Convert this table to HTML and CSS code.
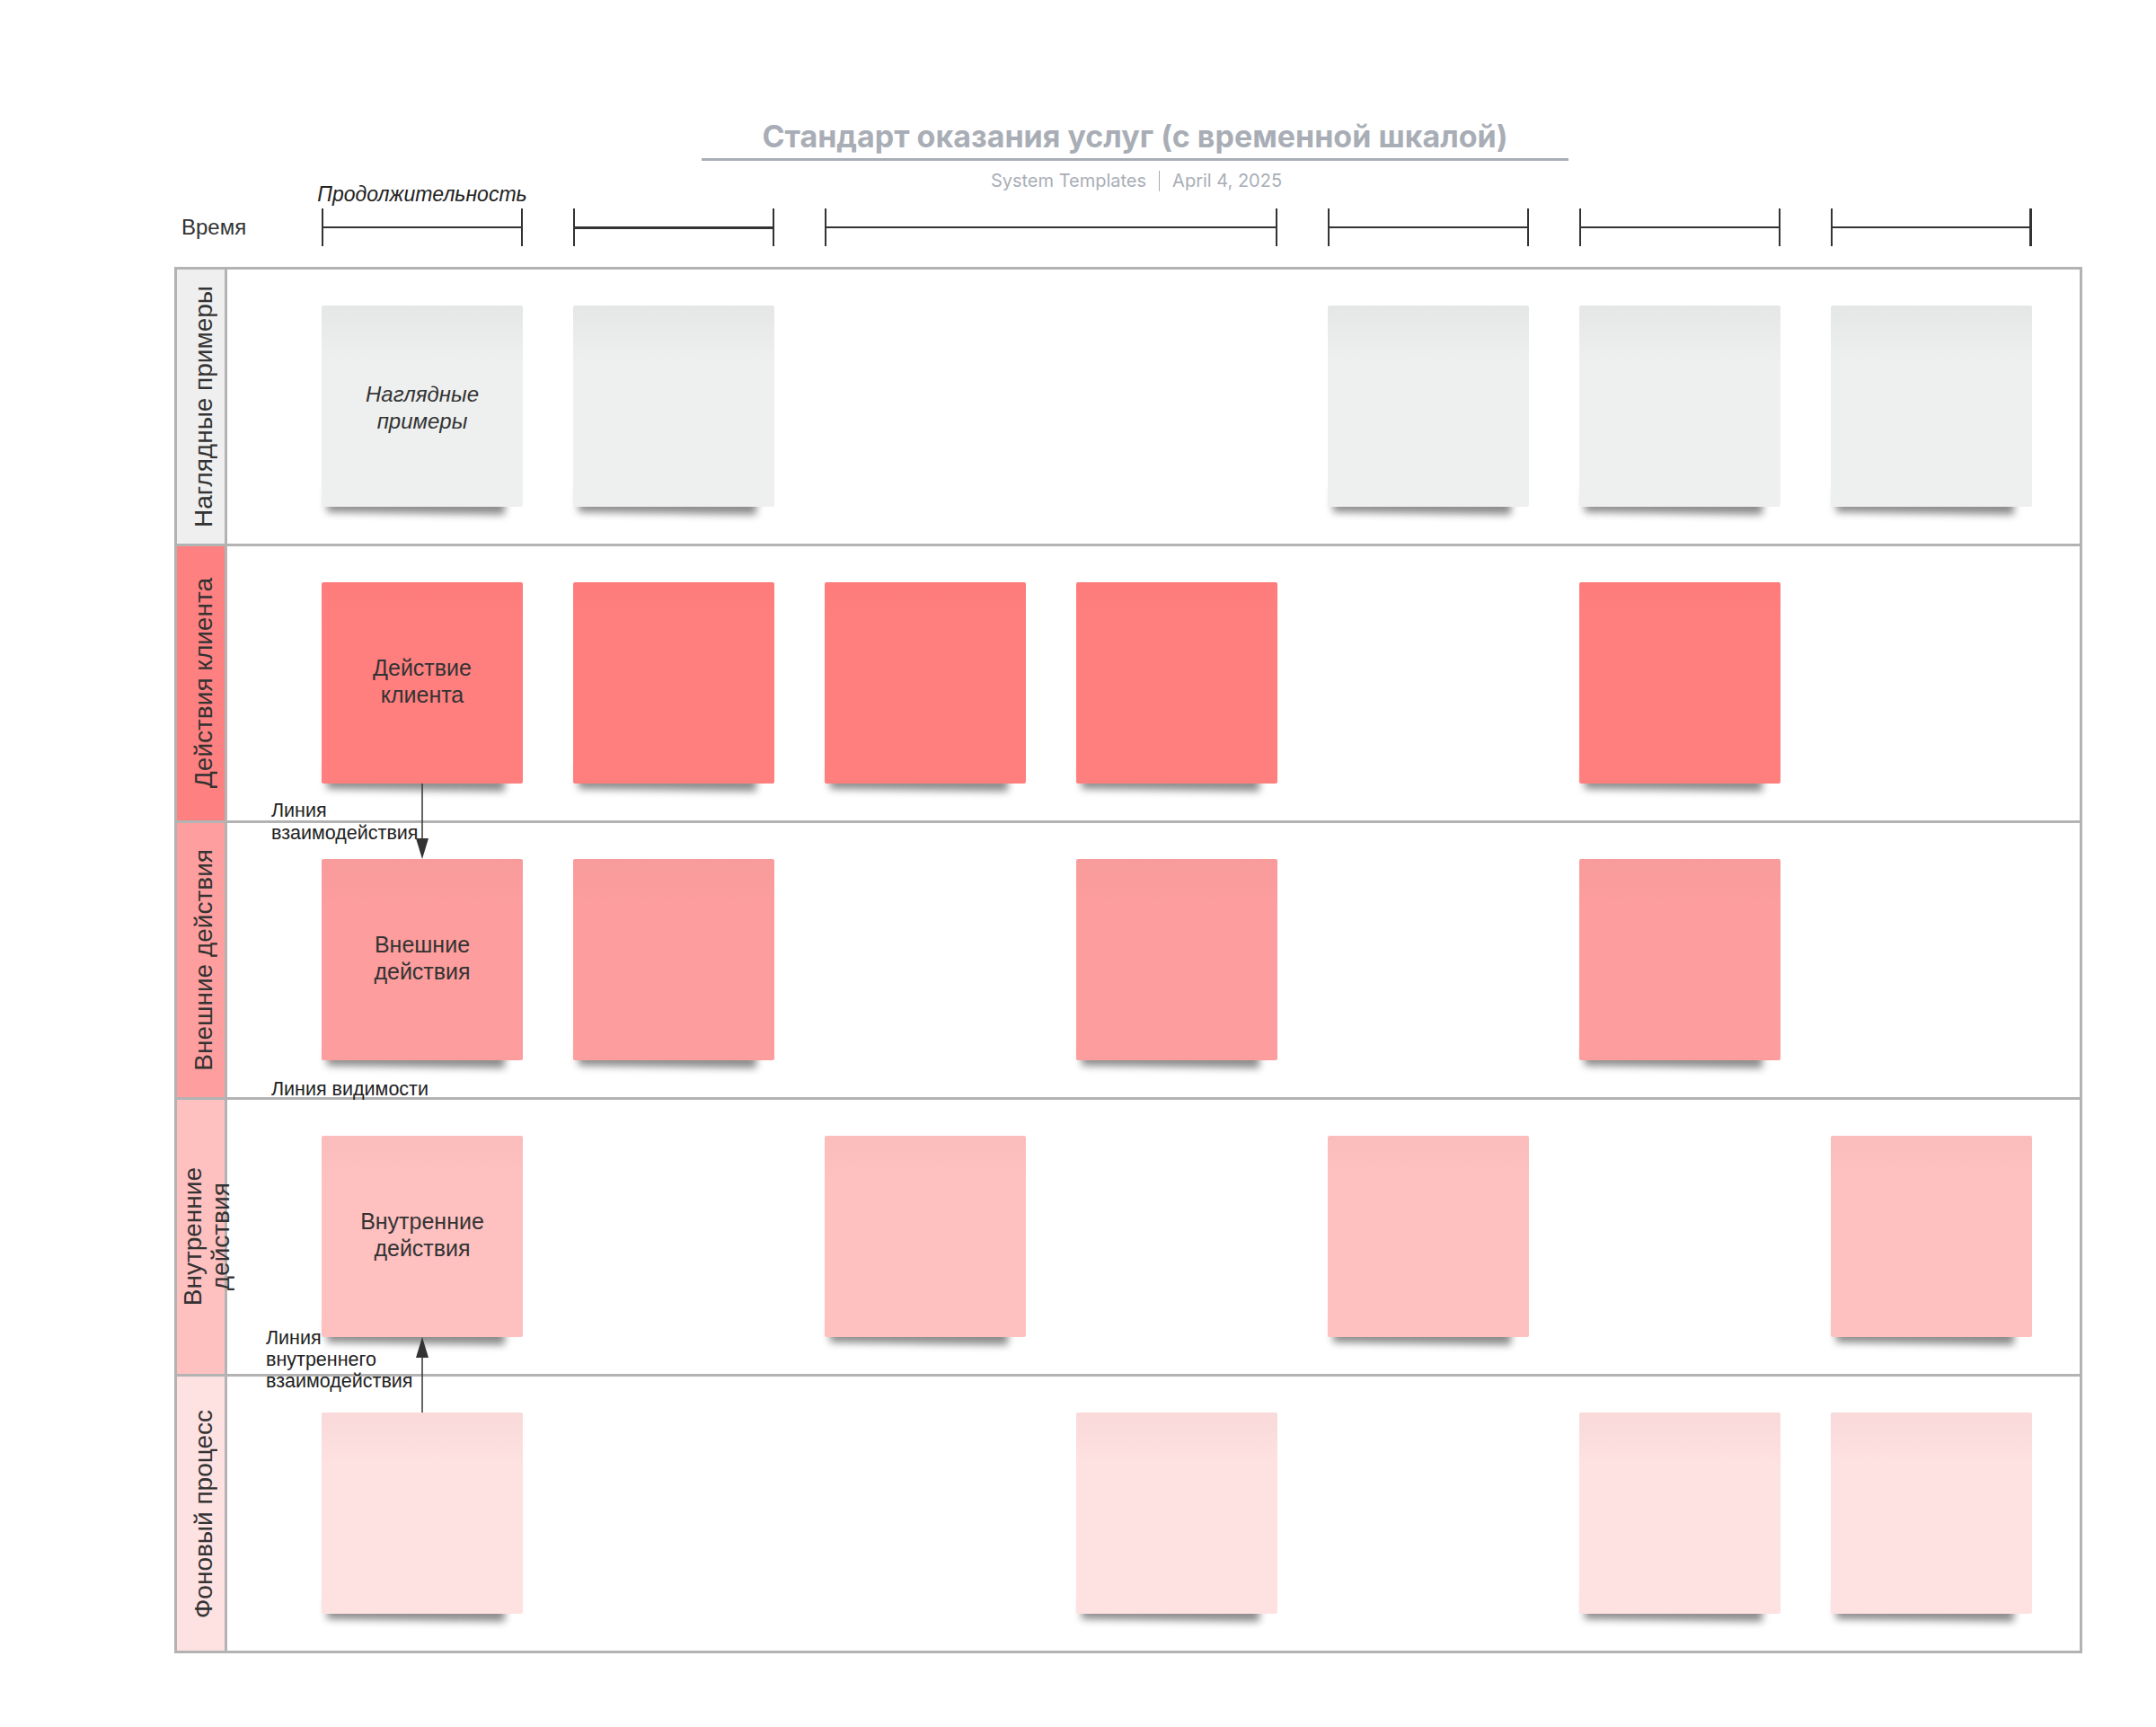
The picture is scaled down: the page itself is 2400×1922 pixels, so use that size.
FILE: index.html
```html
<!DOCTYPE html>
<html lang="ru">
<head>
<meta charset="utf-8">
<title>Стандарт оказания услуг (с временной шкалой)</title>
<link rel="stylesheet" href="styles.css">
</head>
<body>
<div class="page">
  <header class="doc-head">
    <h1 class="doc-title">Стандарт оказания услуг (с временной шкалой)</h1>
    <div class="doc-meta"><span>System Templates</span><span class="sep"></span><span>April 4, 2025</span></div>
  </header>

  <section class="timeline">
    <div class="tl-dur">Продолжительность</div>
    <div class="tl-time">Время</div>
    <div class="seg c1"></div>
    <div class="seg c2 thick"></div>
    <div class="seg c3 span2"></div>
    <div class="seg c5"></div>
    <div class="seg c6"></div>
    <div class="seg c7 end"></div>
  </section>

  <section class="frame">
    <div class="lane">
      <div class="lane-head h-gray"><span>Наглядные примеры</span></div>
      <div class="lane-body">
        <div class="card k-gray c1"><span class="it">Наглядные<br>примеры</span></div>
        <div class="card k-gray c2"></div>
        <div class="card k-gray c5"></div>
        <div class="card k-gray c6"></div>
        <div class="card k-gray c7"></div>
      </div>
    </div>

    <div class="lane">
      <div class="lane-head h-red"><span>Действия клиента</span></div>
      <div class="lane-body">
        <div class="card k-red c1"><span class="txt">Действие<br>клиента</span></div>
        <div class="card k-red c2"></div>
        <div class="card k-red c3"></div>
        <div class="card k-red c4"></div>
        <div class="card k-red c6"></div>
      </div>
      <div class="line-label lbl-interact">Линия<br>взаимодействия</div>
    </div>

    <div class="lane">
      <div class="lane-head h-mid"><span>Внешние действия</span></div>
      <div class="lane-body">
        <div class="card k-mid c1"><span class="txt">Внешние<br>действия</span></div>
        <div class="card k-mid c2"></div>
        <div class="card k-mid c4"></div>
        <div class="card k-mid c6"></div>
      </div>
      <div class="line-label lbl-visible">Линия видимости</div>
    </div>

    <div class="lane">
      <div class="lane-head h-light"><span class="two">Внутренние<br>действия</span></div>
      <div class="lane-body">
        <div class="card k-light c1"><span class="txt">Внутренние<br>действия</span></div>
        <div class="card k-light c3"></div>
        <div class="card k-light c5"></div>
        <div class="card k-light c7"></div>
      </div>
      <div class="line-label lbl-internal">Линия<br>внутреннего<br>взаимодействия</div>
    </div>

    <div class="lane">
      <div class="lane-head h-pale"><span>Фоновый процесс</span></div>
      <div class="lane-body">
        <div class="card k-pale c1"></div>
        <div class="card k-pale c4"></div>
        <div class="card k-pale c6"></div>
        <div class="card k-pale c7"></div>
      </div>
    </div>

    <svg class="arrow arrow-down" width="16" height="84" viewBox="0 0 16 84">
      <line x1="8" y1="0" x2="8" y2="62" stroke="#333" stroke-width="1.5"/>
      <polygon points="1,61 15,61 8,84" fill="#333"/>
    </svg>
    <svg class="arrow arrow-up" width="16" height="84" viewBox="0 0 16 84">
      <line x1="8" y1="22" x2="8" y2="84" stroke="#333" stroke-width="1.5"/>
      <polygon points="8,0 1,23 15,23" fill="#333"/>
    </svg>
  </section>
</div>
</body>
</html>
```

FILE: styles.css
```css
html, body {
  margin: 0;
  padding: 0;
  background: #ffffff;
}

body {
  width: 2400px;
  height: 1922px;
  overflow: hidden;
  font-family: "Liberation Sans", Arial, sans-serif;
  color: #333333;
}

.page {
  padding-left: 194px;
  padding-top: 131px;
}

/* ---------- document header ---------- */
.doc-head {
  margin-left: 587px;
  width: 965px;
  font-family: Inter, "Noto Sans", sans-serif;
  color: #a9aeb6;
}

.doc-title {
  margin: 0;
  padding-bottom: 4px;
  border-bottom: 3px solid #a9aeb6;
  font-size: 34px;
  font-weight: 700;
  line-height: 41px;
  text-align: center;
}

.doc-meta {
  margin-top: 10px;
  height: 24px;
  display: flex;
  justify-content: center;
  align-items: center;
  gap: 14px;
  font-size: 20px;
  line-height: 24px;
  padding-left: 3px;
}

.doc-meta .sep {
  width: 0;
  height: 23px;
  border-left: 1.5px solid #a9aeb6;
}

/* ---------- timeline ---------- */
.timeline {
  margin-top: -10px;
  display: grid;
  grid-template-columns: 108px repeat(7, 224px);
  grid-template-rows: 29px 42px;
  column-gap: 56px;
}

.tl-dur {
  grid-column: 2;
  grid-row: 1;
  justify-self: center;
  align-self: start;
  font-size: 23px;
  font-style: italic;
  line-height: 26px;
  white-space: nowrap;
  color: #222;
}

.tl-time {
  grid-column: 1;
  grid-row: 2;
  align-self: center;
  padding-left: 8px;
  font-size: 24px;
  line-height: 28px;
  color: #333;
}

.seg {
  grid-row: 2;
  height: 42px;
  box-sizing: border-box;
  border-left: 2px solid #333;
  border-right: 2px solid #333;
  display: flex;
  align-items: center;
}

.seg::after {
  content: "";
  flex: 1;
  height: 2px;
  background: #333;
}

.seg.thick { border-left-width: 2.5px; }
.seg.thick::after { height: 3px; }
.seg.end { border-right-width: 3px; }

.c1 { grid-column: 2; }
.c2 { grid-column: 3; }
.c3 { grid-column: 4; }
.c4 { grid-column: 5; }
.c5 { grid-column: 6; }
.c6 { grid-column: 7; }
.c7 { grid-column: 8; }
.seg.span2 { grid-column: 4 / span 2; }

/* ---------- swimlane frame ---------- */
.frame {
  position: relative;
  margin-top: 23px;
  width: 2124px;
  box-sizing: border-box;
  border: 3px solid #b3b3b3;
}

.lane {
  position: relative;
  display: flex;
  height: 308px;
  box-sizing: border-box;
  border-bottom: 3px solid #b3b3b3;
}

.lane:nth-child(5) {
  height: 305px;
  border-bottom: 0;
}

.lane-head {
  flex: 0 0 56px;
  width: 56px;
  min-width: 0;
  max-width: 56px;
  box-sizing: border-box;
  border-right: 3px solid #b3b3b3;
  display: flex;
  align-items: center;
  justify-content: center;
  overflow: visible;
}

.lane-head span {
  writing-mode: vertical-rl;
  transform: rotate(180deg);
  font-size: 28px;
  line-height: 32px;
  white-space: nowrap;
  color: #333;
  padding-right: 6px;
  flex-shrink: 0;
}

.lane-head span.two {
  line-height: 31px;
  padding-right: 12px;
  padding-left: 0;
  text-align: center;
}

.h-gray  { background: #eeefee; }
.h-red   { background: #ff8080; }
.h-mid   { background: #ff9e9e; }
.h-light { background: #ffc0c0; }
.h-pale  { background: #fee1e1; }

.lane-body {
  flex: 1;
  min-width: 0;
  isolation: isolate;
  padding: 40px 0 0 105px;
  display: grid;
  grid-template-columns: repeat(7, 224px);
  column-gap: 56px;
  align-content: start;
}

.lane-body .c1 { grid-column: 1; }
.lane-body .c2 { grid-column: 2; }
.lane-body .c3 { grid-column: 3; }
.lane-body .c4 { grid-column: 4; }
.lane-body .c5 { grid-column: 5; }
.lane-body .c6 { grid-column: 6; }
.lane-body .c7 { grid-column: 7; }

.card {
  grid-row: 1;
  position: relative;
  height: 224px;
  border-radius: 2px;
  display: flex;
  align-items: center;
  justify-content: center;
  text-align: center;
  font-size: 25px;
  line-height: 30px;
  color: #333;
}

.card::before {
  content: "";
  position: absolute;
  z-index: -1;
  left: 6px;
  right: 20px;
  bottom: 4px;
  height: 26px;
  box-shadow: 0 10px 8px rgba(0, 0, 0, 0.45);
  transform: rotate(0.8deg);
  transform-origin: left bottom;
}

.card .it {
  font-style: italic;
  font-size: 24px;
  padding-top: 4px;
}

.card .txt { padding-bottom: 4px; }

.k-gray  { background: linear-gradient(#e5e6e6, #eef0ef 28%); }
.k-red   { background: linear-gradient(#fd7b7b, #ff7f7f 20%); }
.k-mid   { background: linear-gradient(#f89b9b, #fd9d9d 22%); }
.k-light { background: linear-gradient(#fbbcbc, #ffc0c0 22%); }
.k-pale  { background: linear-gradient(#f9d9d9, #fee1e1 25%); }

/* ---------- connector labels and arrows (overlays) ---------- */
.line-label {
  position: absolute;
  font-size: 21.5px;
  line-height: 25px;
  color: #222;
  white-space: nowrap;
}

.lbl-interact { left: 105px; top: 282px; }
.lbl-visible  { left: 105px; top: 284px; }
.lbl-internal { left: 99px; top: 253px; line-height: 24px; }

.arrow {
  position: absolute;
  left: 265px;
}

.arrow-down { top: 572px; }
.arrow-up   { top: 1188px; }
```
